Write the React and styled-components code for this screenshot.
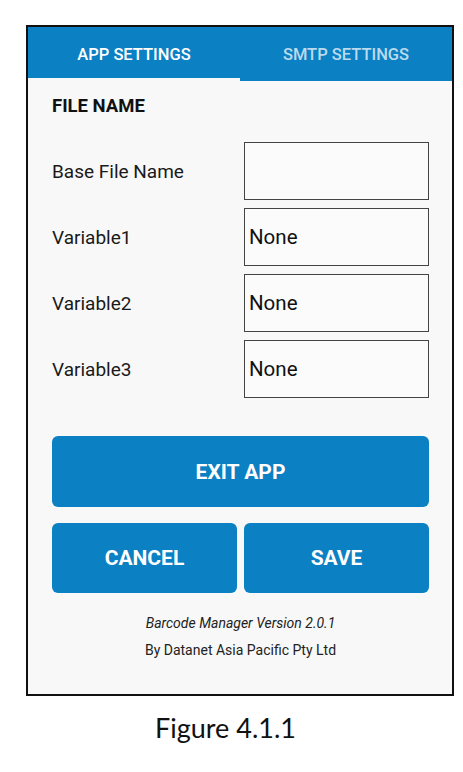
import React from 'react'
import styled, { createGlobalStyle } from 'styled-components'

const GlobalStyle = createGlobalStyle`
    html, body {
        margin:0;
        padding:0;
        background:#ffffff;
    }
`
const Page = styled.div`
    width:463px;
    height:772px;
    padding-top:25px;
    box-sizing:border-box;
    display:flex;
    flex-direction:column;
`
const Frame = styled.div`
    width:428px;
    height:671px;
    box-sizing:border-box;
    border:2px solid #111;
    background:#f8f8f8;
    display:flex;
    flex-direction:column;
    font-family:Roboto, "Liberation Sans", sans-serif;
    margin-left:26px;
`
const Tabs = styled.div`
    display:grid;
    grid-template-columns:1fr 1fr;
    height:54px;
    background:#0b80c3;
`
const Tab = styled.div`
    display:flex;
    align-items:center;
    justify-content:center;
    font-size:16.5px;
    font-weight:500;
    color:${props => props.active ? '#ffffff' : 'rgba(255,255,255,0.72)'};
    border-bottom:3px solid ${props => props.active ? '#f8f8f8' : 'transparent'};
    padding-top:3px;
`
const Body = styled.div`
    padding:14px 23px 0 24px;
    display:flex;
    flex-direction:column;
`
const Heading = styled.div`
    font-size:18.5px;
    line-height:22px;
    font-weight:700;
    color:#111;
    margin-bottom:25px;
`
const Fields = styled.div`
    display:grid;
    grid-template-columns:1fr 1fr;
    column-gap:7px;
    row-gap:8px;
`
const Label = styled.div`
    display:flex;
    align-items:center;
    font-size:19px;
    color:#1a1a1a;
`
const InputField = styled.input`
    height:58px;
    box-sizing:border-box;
    border:1.5px solid #444;
    background:#fbfbfb;
    outline:none;
    padding:0 4px;
    font-family:Roboto, "Liberation Sans", sans-serif;
    font-size:20.5px;
    color:#111;
    width:100%;
    margin:0;
    border-radius:0;
`
const Button = styled.button`
    height:${props => props.tall ? '71px' : '70px'};
    border:none;
    border-radius:6px;
    background:#0b80c3;
    color:#fff;
    font-family:Roboto, "Liberation Sans", sans-serif;
    font-size:21px;
    font-weight:700;
    cursor:pointer;
    width:100%;
`
const Actions = styled.div`
    margin-top:38px;
    display:flex;
    flex-direction:column;
    gap:16px;
`
const ButtonRow = styled.div`
    display:grid;
    grid-template-columns:1fr 1fr;
    gap:7px;
`
const Footer = styled.div`
    margin-top:22px;
    display:flex;
    flex-direction:column;
    align-items:center;
    gap:10px;
    font-size:14px;
    color:#222;
    line-height:17px;
`
const Version = styled.div`
    font-style:italic;
`
const Caption = styled.div`
    margin-top:16px;
    align-self:center;
    margin-right:12px;
    font-family:Lato, "Open Sans", sans-serif;
    font-size:27px;
    color:#111;
    line-height:32px;
`

const fields = [
    { label: 'Base File Name', value: '' },
    { label: 'Variable1', value: 'None' },
    { label: 'Variable2', value: 'None' },
    { label: 'Variable3', value: 'None' },
]

function App() {
    return (
        <>
            <GlobalStyle />
            <Page>
                <Frame>
                    <Tabs>
                        <Tab active>APP SETTINGS</Tab>
                        <Tab>SMTP SETTINGS</Tab>
                    </Tabs>
                    <Body>
                        <Heading>FILE NAME</Heading>
                        <Fields>
                            {fields.map(f => (
                                <React.Fragment key={f.label}>
                                    <Label>{f.label}</Label>
                                    <InputField defaultValue={f.value} />
                                </React.Fragment>
                            ))}
                        </Fields>
                        <Actions>
                            <Button tall>EXIT APP</Button>
                            <ButtonRow>
                                <Button>CANCEL</Button>
                                <Button>SAVE</Button>
                            </ButtonRow>
                        </Actions>
                        <Footer>
                            <Version>Barcode Manager Version 2.0.1</Version>
                            <div>By Datanet Asia Pacific Pty Ltd</div>
                        </Footer>
                    </Body>
                </Frame>
                <Caption>Figure 4.1.1</Caption>
            </Page>
        </>
    )
}

export default App
